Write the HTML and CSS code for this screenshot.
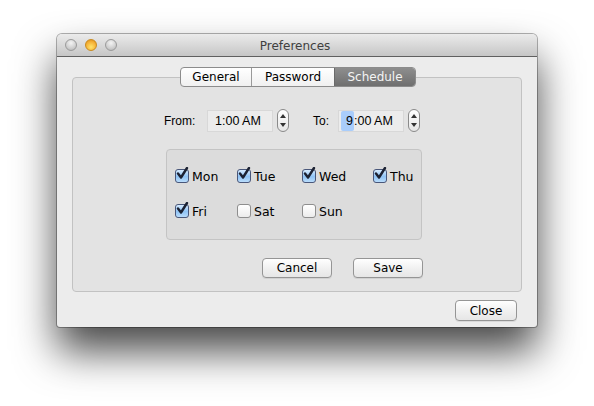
FILE: index.html
```html
<!DOCTYPE html>
<html>
<head>
<meta charset="utf-8">
<link rel="stylesheet" href="styles.css">
</head>
<body>
<div class="window">
  <div class="titlebar">
    <div class="lights">
      <span class="light gray"></span>
      <span class="light orange"></span>
      <span class="light gray"></span>
    </div>
    <div class="title">Preferences</div>
  </div>
  <div class="body">
    <div class="tabview">
      <div class="tabs">
        <span class="tab">General</span>
        <span class="tab">Password</span>
        <span class="tab selected">Schedule</span>
      </div>
      <div class="pane">
        <div class="timerow">
          <span class="lbl from">From:</span>
          <span class="field">1:00 AM</span>
          <span class="stepper"><svg width="12" height="23" viewBox="0 0 12 23"><path d="M6 5 L9 9 L3 9 Z" fill="#333"/><path d="M3 14 L9 14 L6 18 Z" fill="#333"/></svg></span>
          <span class="lbl to">To:</span>
          <span class="field"><span class="sel">9</span>:00 AM</span>
          <span class="stepper"><svg width="12" height="23" viewBox="0 0 12 23"><path d="M6 5 L9 9 L3 9 Z" fill="#333"/><path d="M3 14 L9 14 L6 18 Z" fill="#333"/></svg></span>
        </div>
        <div class="group">
          <div class="days">
            <label class="day"><span class="cb on"><svg width="14" height="14" viewBox="0 0 14 14"><path d="M3 6.5 L6 10.5 L12 1" fill="none" stroke="#1c2233" stroke-width="2.4" stroke-linecap="round" stroke-linejoin="round"/></svg></span>Mon</label>
            <label class="day"><span class="cb on"><svg width="14" height="14" viewBox="0 0 14 14"><path d="M3 6.5 L6 10.5 L12 1" fill="none" stroke="#1c2233" stroke-width="2.4" stroke-linecap="round" stroke-linejoin="round"/></svg></span>Tue</label>
            <label class="day"><span class="cb on"><svg width="14" height="14" viewBox="0 0 14 14"><path d="M3 6.5 L6 10.5 L12 1" fill="none" stroke="#1c2233" stroke-width="2.4" stroke-linecap="round" stroke-linejoin="round"/></svg></span>Wed</label>
            <label class="day"><span class="cb on"><svg width="14" height="14" viewBox="0 0 14 14"><path d="M3 6.5 L6 10.5 L12 1" fill="none" stroke="#1c2233" stroke-width="2.4" stroke-linecap="round" stroke-linejoin="round"/></svg></span>Thu</label>
            <label class="day"><span class="cb on"><svg width="14" height="14" viewBox="0 0 14 14"><path d="M3 6.5 L6 10.5 L12 1" fill="none" stroke="#1c2233" stroke-width="2.4" stroke-linecap="round" stroke-linejoin="round"/></svg></span>Fri</label>
            <label class="day"><span class="cb"></span>Sat</label>
            <label class="day"><span class="cb"></span>Sun</label>
          </div>
        </div>
        <div class="actions">
          <button class="btn cancel">Cancel</button>
          <button class="btn save">Save</button>
        </div>
      </div>
    </div>
    <div class="footer">
      <button class="btn close">Close</button>
    </div>
  </div>
</div>
</body>
</html>
```
FILE: styles.css
```css
html, body {
  margin: 0;
  padding: 0;
  background: #ffffff;
}
body {
  font-family: "DejaVu Sans", sans-serif;
  font-size: 12px;
  color: #000;
  height: 406px;
}
.window {
  margin: 34px 0 0 57px;
  width: 480px;
  height: 293px;
  background: #ececec;
  border-radius: 5px 5px 3px 3px;
  box-shadow: 0 0 0 1px rgba(0,0,0,0.3), 0 24px 42px rgba(0,0,0,0.72);
  overflow: hidden;
}
.titlebar {
  height: 22px;
  border-bottom: 1px solid #606060;
  background: linear-gradient(#ebebeb, #c6c6c6);
  display: flex;
  align-items: center;
}
.lights {
  display: flex;
  gap: 8px;
  padding-left: 8px;
}
.light {
  width: 12px;
  height: 12px;
  border-radius: 50%;
  box-sizing: border-box;
}
.light.gray {
  border: 1px solid #9a9a9a;
  background: radial-gradient(circle at 50% 30%, #f4f4f4, #c8c8c8 70%, #b0b0b0);
}
.light.orange {
  border: 1px solid #c98a1c;
  background: radial-gradient(circle at 50% 70%, #ffe46a, #f6b43a 55%, #dd8a14);
}
.title {
  flex: 1;
  text-align: center;
  margin-right: 64px;
  color: #404040;
  font-size: 12px;
  padding-top: 1px;
}
.body {
  padding: 0 15px;
}
.tabview {
  margin-top: 20px;
  height: 215px;
  box-sizing: border-box;
  border: 1px solid #c2c2c2;
  border-radius: 4px;
  background: #e3e3e3;
  position: relative;
}
.tabs {
  position: absolute;
  top: -11px;
  left: 107px;
  display: flex;
  height: 20px;
  box-sizing: border-box;
  border: 1px solid #8c8c8c;
  border-radius: 4px;
  background: linear-gradient(#ffffff, #f0f0f0);
  overflow: hidden;
}
.tab {
  display: flex;
  align-items: center;
  justify-content: center;
  font-size: 12px;
  color: #000;
  border-left: 1px solid #9a9a9a;
}
.tab:nth-child(1) { width: 70px; border-left: none; }
.tab:nth-child(2) { width: 82px; }
.tab:nth-child(3) { width: 80px; }
.tab.selected {
  background: linear-gradient(#8e8e8e, #6f6f6f);
  color: #f4f4f4;
  border-left-color: #6a6a6a;
}
.pane {
  padding-top: 31px;
}
.timerow {
  display: flex;
  align-items: center;
  height: 23px;
  padding-left: 91px;
  font-family: "Liberation Sans", sans-serif;
  font-size: 12px;
}
.lbl.from { width: 43px; }
.lbl.to { width: 25px; margin-left: 24px; }
.field {
  width: 66px;
  height: 22px;
  box-sizing: border-box;
  border: 1px solid #d8d8d8;
  background: #ececec;
  display: flex;
  align-items: center;
  padding-left: 7px;
  font-size: 12.5px;
  color: #000;
}
.sel {
  background: #a9cdfb;
  padding: 3px 1px 3px 5px;
  margin-left: -5px;
  border-radius: 2px;
}
.stepper {
  width: 12px;
  height: 23px;
  margin-left: 4px;
  box-sizing: border-box;
  border: 1px solid #8a8a8a;
  border-radius: 6px;
  background: linear-gradient(#ffffff, #e6e6e6);
  display: flex;
  align-items: center;
  justify-content: center;
  overflow: hidden;
}
.stepper svg { display: block; margin: -1px; }
.group {
  margin: 17px 0 0 93px;
  width: 256px;
  height: 91px;
  box-sizing: border-box;
  border: 1px solid #c4c4c4;
  border-radius: 4px;
  background: #dcdcdc;
  padding: 19px 0 0 8px;
}
.days {
  display: grid;
  grid-template-columns: 62px 65px 71px 60px;
  row-gap: 21px;
}
.day {
  display: flex;
  align-items: center;
  height: 14px;
  font-size: 12.5px;
  color: #000;
}
.cb {
  width: 14px;
  height: 14px;
  box-sizing: border-box;
  border: 1px solid #8e8e8e;
  border-radius: 3px;
  background: linear-gradient(#ffffff, #ececec);
  margin-right: 3px;
  flex: none;
  position: relative;
}
.cb.on {
  border-color: #49577a;
  background: linear-gradient(#d6ebff, #8fc3f5 55%, #b9dcfb);
}
.cb svg {
  position: absolute;
  left: -1px;
  top: -3px;
}
.actions {
  display: flex;
  gap: 21px;
  margin: 18px 0 0 189px;
}
.btn {
  font-family: "DejaVu Sans", sans-serif;
  font-size: 12px;
  color: #000;
  height: 20px;
  padding: 0;
  box-sizing: border-box;
  border: 1px solid #959595;
  border-radius: 4px;
  background: linear-gradient(#ffffff, #f1f1f1 50%, #e6e6e6);
  box-shadow: 0 1px 0 rgba(0,0,0,0.08);
}
.btn.cancel, .btn.save { width: 70px; }
.btn.close { width: 62px; height: 21px; }
.footer {
  display: flex;
  justify-content: flex-end;
  padding: 8px 5px 0 0;
}
```
